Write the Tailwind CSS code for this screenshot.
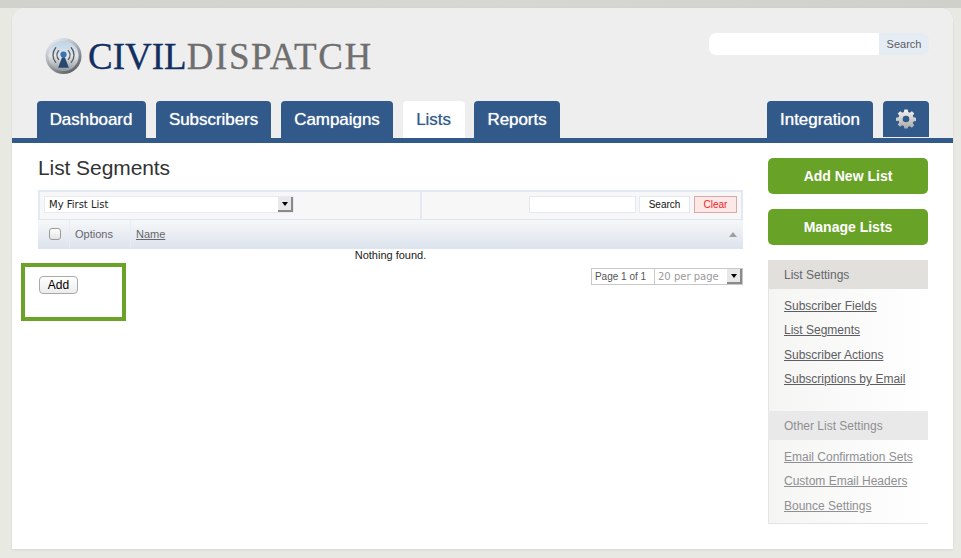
<!DOCTYPE html>
<html>
<head>
<meta charset="utf-8">
<script src="https://cdn.jsdelivr.net/npm/@tailwindcss/browser@4"></script>
</head>
<body class="relative h-[558px] w-[961px] overflow-hidden bg-[#e9e9e4] font-['Liberation_Sans',Arial,sans-serif]">
<div class="h-[8px] bg-gradient-to-r from-[#d2d2cd] via-[#d8d8d3] to-[#d0d0cb]"></div>
<div class="ml-[12px] flex h-[541px] w-[941px] flex-col overflow-hidden rounded-t-[14px] bg-white shadow-[0_1px_3px_rgba(0,0,0,0.08)]">
  <header class="h-[130px] shrink-0 bg-[#eeeeee] pl-[25px] pr-[24px]">
    <div class="flex h-[93px] items-start justify-between">
      <div class="ml-[8px] mt-[28px] flex items-center">
        <svg width="37" height="38" viewBox="0 0 38 38" class="shrink-0">
          <defs>
            <linearGradient id="lg1" x1="0.2" y1="0" x2="0.8" y2="1"><stop offset="0" stop-color="#eef1f4"/><stop offset="0.5" stop-color="#a4a9ae"/><stop offset="1" stop-color="#55585c"/></linearGradient>
            <linearGradient id="lg2" x1="0" y1="0" x2="0" y2="1"><stop offset="0" stop-color="#bcd4e9"/><stop offset="0.5" stop-color="#e3e6e9"/><stop offset="1" stop-color="#92979c"/></linearGradient>
          </defs>
          <circle cx="19" cy="19" r="18.5" fill="url(#lg1)"/>
          <circle cx="19" cy="19" r="15.5" fill="url(#lg2)"/>
          <g fill="none" stroke="#5a5f64" stroke-width="1.4" stroke-linecap="round">
            <path d="M14 13.500 A7 7 0 0 0 14 22.500"/><path d="M24 13.500 A7 7 0 0 1 24 22.500"/>
            <path d="M11 10.500 A11.500 11.500 0 0 0 11 25.500"/><path d="M27 10.500 A11.500 11.500 0 0 1 27 25.500"/>
          </g>
          <circle cx="19" cy="17.500" r="3.2" fill="#3274b5"/>
          <path d="M17.500 20.500 L20.500 20.500 L24.500 31 L13.500 31 Z" fill="#27496f"/>
        </svg>
        <div class="ml-[6px] whitespace-nowrap pt-[2px] font-['Liberation_Serif',serif] text-[37px] leading-[38px] [-webkit-text-stroke:0.3px_currentColor]"><span class="text-[#122f63]">CIVIL</span><span class="tracking-[1.6px] text-[#6f6f6f]">DISPATCH</span></div>
      </div>
      <div class="mt-[25px] flex h-[22px] w-[220px] overflow-hidden rounded-[7px]">
        <div class="w-[170px] bg-white"></div>
        <div class="flex w-[50px] items-center justify-center bg-[#e6ecf4] text-[11px] text-[#5d5d62]">Search</div>
      </div>
    </div>
    <nav class="flex h-[37px] items-end text-[17px] font-normal tracking-[-0.05px] text-white [text-shadow:0_0_1px_rgba(255,255,255,0.8)]">
      <a class="flex h-[37px] w-[109px] items-center justify-center rounded-t-[4px] bg-[#315a8a] pr-[1px]">Dashboard</a>
      <a class="ml-[10px] flex h-[37px] w-[115px] items-center justify-center rounded-t-[4px] bg-[#315a8a]">Subscribers</a>
      <a class="ml-[10px] flex h-[37px] w-[112px] items-center justify-center rounded-t-[4px] bg-[#315a8a]">Campaigns</a>
      <a class="ml-[10px] flex h-[37px] w-[62px] items-center justify-center rounded-t-[4px] bg-white pr-[1px] text-[#315a8a] [text-shadow:0_0_1px_rgba(49,90,138,0.5)]">Lists</a>
      <a class="ml-[9px] flex h-[37px] w-[86px] items-center justify-center rounded-t-[4px] bg-[#315a8a]">Reports</a>
      <a class="ml-auto flex h-[37px] w-[106px] items-center justify-center rounded-t-[4px] bg-[#315a8a]">Integration</a>
      <a class="ml-[10px] flex h-[36px] w-[46px] items-center justify-center self-start rounded-t-[4px] bg-[#315a8a]">
        <svg width="20" height="20" viewBox="0 0 24 24"><defs><linearGradient id="gg" x1="0" y1="0" x2="0" y2="1"><stop offset="0" stop-color="#f4f4f4"/><stop offset="1" stop-color="#a9a9a9"/></linearGradient></defs><path fill="url(#gg)" fill-rule="evenodd" d="M10 1h4l.6 3.100 1.900.8L19.100 3.100 21.900 5.900l-1.800 2.600.8 1.900L24 11v4l-3.100.6-.8 1.900 1.800 2.600-2.800 2.800-2.600-1.800-1.900.8L14 24h-4l-.6-3.100-1.900-.8-2.600 1.800-2.800-2.800 1.800-2.600-.8-1.900L0 15v-4l3.100-.6.8-1.900L2.100 5.900 4.900 3.100l2.600 1.800 1.900-.8zM12 8.500a4 4 0 1 0 0 8 4 4 0 0 0 0-8z" transform="translate(0 -0.500)"/></svg>
      </a>
    </nav>
  </header>
  <div class="h-[5px] shrink-0 bg-[#315a8a]"></div>
  <main class="flex flex-1 bg-white pl-[26px] pr-[25px]">
    <section class="w-[705px]">
      <h1 class="mt-[12px] text-[21px] leading-[26px] tracking-[-0.08px] text-[#333333]">List Segments</h1>
      <div class="mt-[9px] flex h-[29px] border-2 border-b-0 border-[#e3e9f2] bg-[#f7f7f7]">
        <div class="flex w-[382px] items-center border-r-2 border-[#e3e9f2] pb-[2px] pl-[4px]">
          <div class="flex h-[17px] w-[250px] items-center justify-between border border-[#e6ebf3] bg-white pl-[4px] font-['DejaVu_Sans',sans-serif] text-[10px] text-[#222]">
            <span>My First List</span>
            <span class="flex h-[15px] w-[15px] items-center justify-center bg-[#e8e8e8] border-r-2 border-b-2 border-[#8a8a8a] text-[0px]"><span class="border-x-[3px] border-t-[4px] border-x-transparent border-t-black"></span></span>
          </div>
        </div>
        <div class="flex flex-1 items-center justify-end gap-[3px] pb-[2px] pr-[4px]">
          <div class="h-[17px] w-[107px] border border-[#e3e9f2] bg-white"></div>
          <div class="flex h-[17px] w-[51px] items-center justify-center border border-[#e3e9f2] bg-white text-[10px] text-[#111]">Search</div>
          <div class="ml-[1px] flex h-[17px] w-[43px] items-center justify-center border border-[#d8a9a9] bg-[#fde8e8] text-[10px] text-[#ee1c1c]">Clear</div>
        </div>
      </div>
      <div class="flex h-[30px] items-center border-y border-[#dde5ee] bg-gradient-to-b from-[#f6f7f8] to-[#dde4ed] text-[11px] text-[#66666c]">
        <div class="flex h-full w-[32px] items-center justify-center border-r border-[#e8edf3] pl-[2px]">
          <span class="h-[12px] w-[12px] rounded-[3px] border border-[#9a9a9a] bg-gradient-to-b from-white to-[#e4e4e4]"></span>
        </div>
        <div class="flex h-full w-[61px] items-center border-r border-[#e8edf3] pl-[5px]">Options</div>
        <a class="ml-[5px] underline">Name</a>
        <span class="ml-auto mr-[6px] border-x-[4px] border-b-[5px] border-x-transparent border-b-[#a0a0a0]"></span>
      </div>
      <p class="text-center text-[11px] leading-[13px] text-[#222]">Nothing found.</p>
      <div class="mt-[6px] flex justify-between">
        <button class="ml-[1px] mt-[8px] flex h-[18px] w-[39px] items-center justify-center rounded-[4px] border border-[#a9a9a9] bg-gradient-to-b from-white to-[#ececec] text-[12px] text-black">Add</button>
        <div class="flex h-[17px] border border-[#c9c9c9] bg-white text-[10px]">
          <span class="flex w-[63px] items-center justify-center border-r border-[#c9c9c9] pr-[5px] text-[#555]">Page 1 of 1</span>
          <span class="flex w-[87px] items-center justify-between pl-[3px] font-['DejaVu_Sans',sans-serif] text-[#9a9a9a]">20 per page<span class="flex h-[15px] w-[15px] items-center justify-center border-r-2 border-b-2 border-[#8a8a8a] bg-[#e8e8e8]"><span class="border-x-[3px] border-t-[4px] border-x-transparent border-t-black"></span></span></span>
        </div>
      </div>
    </section>
    <aside class="ml-[25px] w-[160px] pt-[15px]">
      <a class="flex h-[36px] items-center justify-center rounded-[5px] bg-[#68a328] text-[14px] font-bold text-white">Add New List</a>
      <a class="mt-[15px] flex h-[36px] items-center justify-center rounded-[5px] bg-[#68a328] text-[14px] font-bold text-white">Manage Lists</a>
      <div class="mt-[15px] border-l border-[#e4e4e4] bg-gradient-to-r from-[#f5f5f4] to-white">
        <h2 class="-ml-[1px] flex h-[29px] items-center bg-[#e1e0dd] pl-[16px] text-[12px] text-[#66666c]">List Settings</h2>
        <ul class="h-[122px] pl-[15px] pt-[4.750px] text-[12px] leading-[24.500px] text-[#5d5d62] underline">
          <li>Subscriber Fields</li>
          <li>List Segments</li>
          <li>Subscriber Actions</li>
          <li>Subscriptions by Email</li>
        </ul>
        <h2 class="-ml-[1px] flex h-[29px] items-center bg-[#e9e9e9] pl-[16px] text-[12px] text-[#8f8f93]">Other List Settings</h2>
        <ul class="h-[84px] border-b border-[#e4e4e4] pl-[15px] pt-[4.750px] text-[12px] leading-[24.500px] text-[#8f8f93] underline">
          <li>Email Confirmation Sets</li>
          <li>Custom Email Headers</li>
          <li>Bounce Settings</li>
        </ul>
      </div>
    </aside>
  </main>
</div>
<div class="absolute left-[21px] top-[263px] h-[58px] w-[105px] border-4 border-[#6ba329]"></div>
</body>
</html>
